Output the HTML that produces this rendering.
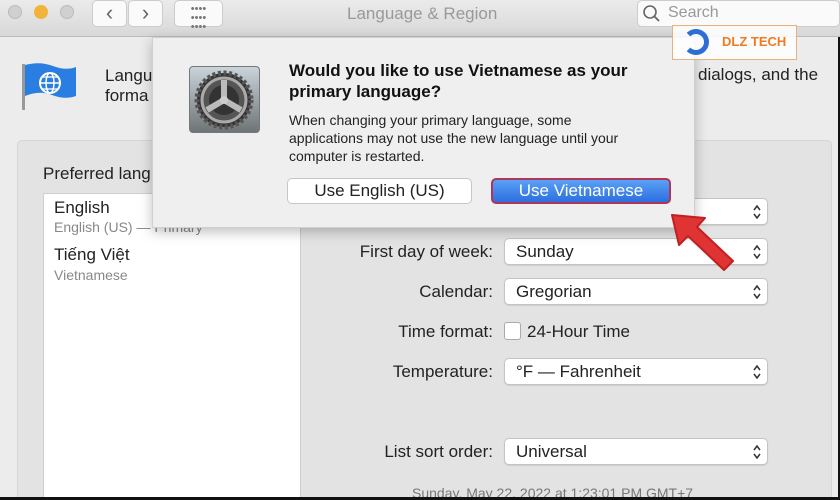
<!DOCTYPE html>
<html><head><meta charset="utf-8"><style>
*{margin:0;padding:0;box-sizing:border-box}
html,body{width:840px;height:500px;overflow:hidden}
body{background:#ececec;font-family:"Liberation Sans",sans-serif;position:relative;color:#222}
.abs{position:absolute}
.title{left:0;top:0;width:840px;height:37px;background:linear-gradient(#ebebeb,#d8d8d8);border-bottom:1px solid #bdbdbd}
.dot{width:14px;height:14px;border-radius:50%;top:5px}
.btn{background:#fafafa;border:1px solid #ccc;border-radius:5px}
.lbl{font-size:17px;text-align:right;width:200px;left:293px}
.pop{left:504px;width:264px;height:27px;background:#fff;border:1px solid #c4c4c4;border-radius:5px;font-size:17px;padding:3px 0 0 11px;box-shadow:0 1px 1px rgba(0,0,0,.1)}
.ch{position:absolute;right:5px;top:5px}
</style></head><body>
<div class="abs title"></div>
<div class="abs dot" style="left:8px;background:#d0d0d0;border:1px solid #bbb"></div>
<div class="abs dot" style="left:34px;background:#f2b33d"></div>
<div class="abs dot" style="left:60px;background:#d0d0d0;border:1px solid #bbb"></div>
<div class="abs btn" style="left:92px;top:0;width:35px;height:27px;font-size:22px;color:#666;text-align:center;line-height:24px">‹</div>
<div class="abs btn" style="left:128px;top:0;width:35px;height:27px;font-size:22px;color:#666;text-align:center;line-height:24px">›</div>
<div class="abs btn" style="left:174px;top:0;width:49px;height:27px;font-size:11px;color:#777;text-align:center;line-height:9px;padding-top:4px">••••<br>••••<br>••••</div>
<div class="abs" style="left:347px;top:4px;font-size:17px;color:#999">Language &amp; Region</div>
<div class="abs" style="left:637px;top:0;width:203px;height:27px;background:#fafafa;border:1px solid #ccc;border-radius:5px;font-size:16px;color:#999;padding:3px 0 0 30px">Search</div>
<svg class="abs" style="left:642px;top:4px" width="20" height="20"><circle cx="8" cy="8" r="6" fill="none" stroke="#666" stroke-width="1.6"/><line x1="12" y1="12" x2="17" y2="17" stroke="#666" stroke-width="1.8"/></svg>
<svg class="abs" style="left:20px;top:62px" width="60" height="50"><rect x="2" y="2" width="3" height="46" fill="#999"/><path d="M5 3 Q20 -1 33 4 T56 5 V34 Q45 38 32 33 T5 34Z" fill="#2a7de1"/><circle cx="30" cy="21" r="10" fill="none" stroke="#fff" stroke-width="2"/><ellipse cx="30" cy="21" rx="4" ry="10" fill="none" stroke="#fff" stroke-width="1.5"/><line x1="20" y1="21" x2="40" y2="21" stroke="#fff" stroke-width="1.5"/><line x1="22" y1="15" x2="38" y2="15" stroke="#fff" stroke-width="1.3"/><line x1="22" y1="27" x2="38" y2="27" stroke="#fff" stroke-width="1.3"/></svg>
<div class="abs" style="left:105px;top:66px;font-size:17px;line-height:20px">Langu<br>forma</div>
<div class="abs" style="left:698px;top:65px;font-size:17px">dialogs, and the</div>
<div class="abs" style="left:17px;top:140px;width:815px;height:370px;background:#e3e3e3;border:1px solid #d6d6d6;border-radius:5px"></div>
<div class="abs" style="left:43px;top:164px;font-size:17px">Preferred lang</div>
<div class="abs" style="left:43px;top:193px;width:258px;height:320px;background:#fff;border:1px solid #cfcfcf"></div>
<div class="abs" style="left:54px;top:198px;font-size:17px">English</div>
<div class="abs" style="left:54px;top:219px;font-size:14px;color:#888">English (US) — Primary</div>
<div class="abs" style="left:54px;top:245px;font-size:17px">Tiếng Việt</div>
<div class="abs" style="left:54px;top:267px;font-size:14px;color:#888">Vietnamese</div>
<div class="abs pop" style="top:198px"><svg class="ch" width="10" height="16"><path d="M2 6 L5 2 L8 6 M2 10 L5 14 L8 10" fill="none" stroke="#333" stroke-width="1.5"/></svg></div>
<div class="abs lbl" style="top:242px">First day of week:</div>
<div class="abs pop" style="top:238px">Sunday<svg class="ch" width="10" height="16"><path d="M2 6 L5 2 L8 6 M2 10 L5 14 L8 10" fill="none" stroke="#333" stroke-width="1.5"/></svg></div>
<div class="abs lbl" style="top:282px">Calendar:</div>
<div class="abs pop" style="top:278px">Gregorian<svg class="ch" width="10" height="16"><path d="M2 6 L5 2 L8 6 M2 10 L5 14 L8 10" fill="none" stroke="#333" stroke-width="1.5"/></svg></div>
<div class="abs lbl" style="top:322px">Time format:</div>
<div class="abs" style="left:504px;top:322px;width:17px;height:18px;background:#fff;border:1px solid #aaa;border-radius:3px"></div>
<div class="abs" style="left:527px;top:322px;font-size:17px">24-Hour Time</div>
<div class="abs lbl" style="top:362px">Temperature:</div>
<div class="abs pop" style="top:358px">°F — Fahrenheit<svg class="ch" width="10" height="16"><path d="M2 6 L5 2 L8 6 M2 10 L5 14 L8 10" fill="none" stroke="#333" stroke-width="1.5"/></svg></div>
<div class="abs lbl" style="top:442px">List sort order:</div>
<div class="abs pop" style="top:438px">Universal<svg class="ch" width="10" height="16"><path d="M2 6 L5 2 L8 6 M2 10 L5 14 L8 10" fill="none" stroke="#333" stroke-width="1.5"/></svg></div>
<div class="abs" style="left:412px;top:485px;font-size:14px;color:#777">Sunday, May 22, 2022 at 1:23:01 PM GMT+7</div>
<div class="abs" style="left:152px;top:37px;width:543px;height:191px;background:#efefef;border:1px solid #d0d0d0;box-shadow:0 4px 12px rgba(0,0,0,.25)"></div>
<div class="abs" style="left:189px;top:66px;width:71px;height:67px;border-radius:4px;background:linear-gradient(#c9d4db,#6f7476);border:1px solid #777"></div>
<svg class="abs" style="left:194px;top:70px" width="60" height="60"><circle cx="30" cy="30" r="27" fill="#333" stroke="#555" stroke-width="5" stroke-dasharray="3 2.5"/><circle cx="30" cy="30" r="22" fill="#555" stroke="#aaa" stroke-width="3"/><circle cx="30" cy="30" r="15" fill="#333"/><path d="M30 30 L30 10 M30 30 L13 40 M30 30 L47 40" stroke="#bbb" stroke-width="6"/><circle cx="30" cy="30" r="4" fill="#ccc"/></svg>
<div class="abs" style="left:289px;top:60px;font-size:17px;font-weight:bold;line-height:21px;color:#111">Would you like to use Vietnamese as your<br>primary language?</div>
<div class="abs" style="left:289px;top:111px;font-size:14px;line-height:18px;color:#222">When changing your primary language, some<br>applications may not use the new language until your<br>computer is restarted.</div>
<div class="abs" style="left:287px;top:178px;width:185px;height:26px;background:#fff;border:1px solid #c6c6c6;border-radius:5px;font-size:17px;text-align:center;line-height:24px">Use English (US)</div>
<div class="abs" style="left:491px;top:178px;width:180px;height:26px;background:linear-gradient(#5aa0f5,#2c6fe0);border:2px solid #b0355a;border-radius:5px;font-size:17px;text-align:center;line-height:22px;color:#fff">Use Vietnamese</div>
<div class="abs" style="left:672px;top:25px;width:125px;height:35px;background:rgba(255,255,255,.85);border:1px solid #e8b27a"></div>
<div class="abs" style="left:683px;top:29px;width:26px;height:26px;border-radius:50%;border:5px solid #2c6ed6;border-left-color:transparent"></div>
<div class="abs" style="left:722px;top:34px;font-size:13px;font-weight:bold;color:#f07a20">DLZ TECH</div>
<svg class="abs" style="left:660px;top:205px" width="90" height="80"><path d="M12 10 L45 13 L37 22 L73 56 L64 65 L28 31 L19 40 Z" fill="#e03434" stroke="#c02020" stroke-width="2" stroke-linejoin="round"/></svg>
<div class="abs" style="left:0;top:497px;width:840px;height:3px;background:#111"></div>
<div class="abs" style="left:838px;top:37px;width:2px;height:463px;background:#111"></div>
</body></html>
